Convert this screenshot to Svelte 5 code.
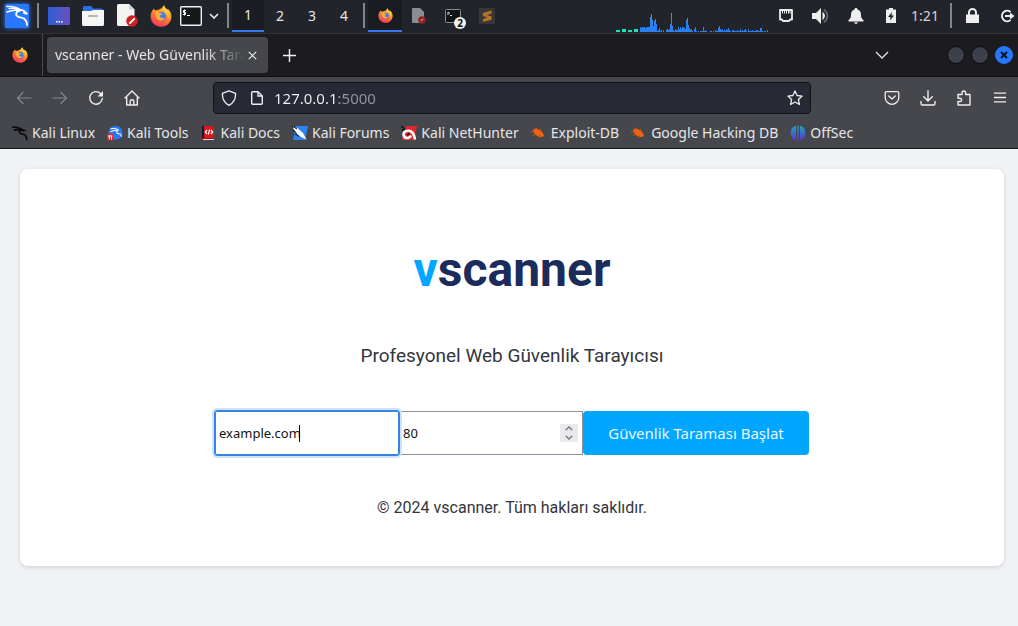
<script>
  let target = $state('example.com');
  let port = $state(80);
  let address = $state('127.0.0.1:5000');

  const workspaces = [1, 2, 3, 4];
  const bookmarks = [
    { name: 'Kali Linux', icon: 'dragon' },
    { name: 'Kali Tools', icon: 'tools' },
    { name: 'Kali Docs', icon: 'docs' },
    { name: 'Kali Forums', icon: 'forums' },
    { name: 'Kali NetHunter', icon: 'nethunter' },
    { name: 'Exploit-DB', icon: 'bug' },
    { name: 'Google Hacking DB', icon: 'bug' },
    { name: 'OffSec', icon: 'offsec' }
  ];
  // CPU load samples, one per pixel column, starting after the idle marks
  const load = [
    5, 4, 5, 5, 5, 4, 5, 5, 5, 5, 15, 18, 12, 6, 11, 13, 8, 1, 2, 4, 1, 2, 0, 2, 0, 0, 2, 3, 2, 3, 8, 19,
    6, 2, 1, 3, 2, 2, 5, 3, 5, 3, 5, 5, 4, 3, 12, 14, 7, 4, 2, 3, 1, 0, 3, 5, 1, 0, 1, 0, 1, 1, 1, 5, 1, 2, 1, 0,
    0, 0, 1, 1, 0, 1, 0, 2, 1, 1, 4, 6, 3, 2, 3, 1, 2, 1, 3, 2, 4, 2, 1, 0, 2, 2, 1, 1, 1, 2, 1, 1, 3,
    1, 2, 1, 2, 3, 1, 0, 3, 1, 1, 1, 2, 1, 1, 1, 2, 2, 1, 1, 4, 4, 1, 0, 1, 1, 0, 2
  ];
</script>

{#snippet firefox(size)}
  <svg width={size} height={size} viewBox="0 0 22 22" aria-hidden="true">
    <defs>
      <linearGradient id="fox" x1="0.8" y1="0" x2="0.3" y2="1">
        <stop offset="0" stop-color="#ffe14a" />
        <stop offset="0.45" stop-color="#ff8a2a" />
        <stop offset="1" stop-color="#f5325b" />
      </linearGradient>
    </defs>
    <path fill="url(#fox)" d="M4 3.500c.3 1 .8 1.500 1.700 2 .9-.6 2-.8 3.100-.6C9.800 4 11 3.300 12 3.200 12.300 2 13 1 14.200.2c.2 2 1.600 3.200 3.200 4.700.1-.5 0-1 0-1.500C20 5.600 21.700 8.600 21.500 12c-.4 5.600-4.800 9.800-10.400 9.800C5.300 21.800.6 17.200.6 11.500.6 8.300 1.800 5.500 4 3.500z" />
    <circle cx="11" cy="11.600" r="4.600" fill="#7a45d8" />
    <circle cx="11.700" cy="10.600" r="3.700" fill="#3c83e8" />
    <path fill="#ffae35" d="M4.500 7.500c2-1.500 4-1 5.200.6l2.600.5c0 1-1.600 1.500-2.500 2-.2 2.200 1.800 3 3.600 2.200 1 0 1.200.8.300 1.600-2 2-5.500 1.500-7-.7C5.500 11.500 5.800 9.300 4.500 7.500z" />
    <path fill="#ffd43e" d="M14.200.2c.2 2 1.600 3.200 3.200 4.700 2 3 2.600 6.500.6 9.800.4-4-1-6.700-4-8.500-1.400-1.800-1.500-4 .2-6z" opacity=".75" />
  </svg>
{/snippet}

{#snippet dragon(color)}
  <path fill="none" stroke={color} stroke-linecap="round" d="M1 2.200c3-.4 6 .2 8.600 2.200M2.600 5.200c2.500-1 5-.7 7-.1M9 4.500C6.500 6.500 7.500 9 10.500 9.200c3 .2 4 2.300 4.300 5.400" stroke-width="1.800" />
  <path fill={color} d="M9 3.800c2-.2 4 .7 6 2.800l-2.500-.5-1 .6L9 5.500z" />
{/snippet}

<div class="screen">
  <header class="panel">
    <button class="cell" aria-label="Applications">
      <svg class="kali" width="28" height="28" viewBox="0 0 28 28">
        <rect x="2" y="2" width="24" height="24" rx="1" fill="#2777ff" />
        <g fill="none" stroke="#fff" stroke-linecap="round" stroke-linejoin="round">
          <path stroke-width="1.400" d="M4 4.500c5-.5 9.500.3 14 3.500M4 10c4.500-2 8.500-2 12.500-1.500M6 6.500c3-.5 6-.2 9 .8" />
          <path stroke-width="1.800" d="M17 8.500c-4 .5-5.500 5-1.500 6.300 4 .9 7.500 1 8.700 8.200M17 8c3-.6 4.500 1 6.800 3.500l-3-.5" />
        </g>
      </svg>
    </button>
    <span class="rule"></span>
    <button class="cell" aria-label="Show desktop">
      <svg width="22" height="18" viewBox="0 0 22 18">
        <defs><linearGradient id="desk"><stop offset="0" stop-color="#2f5fd6" /><stop offset="1" stop-color="#6a4fc0" /></linearGradient></defs>
        <rect width="22" height="18" rx="1" fill="url(#desk)" />
        <path fill="#fff" d="M8 14h1.500v1.500H8zM10.500 14H12v1.500h-1.500zM13 14h1.500v1.500H13z" />
      </svg>
    </button>
    <button class="cell" aria-label="File manager">
      <svg width="22" height="20" viewBox="0 0 22 20">
        <path fill="#2b6fe0" d="M1 1.500Q1 0 2.500 0H9l2.500 2.500H19Q21 2.500 21 4.500V9H1z" />
        <path fill="#f5f5f3" d="M0 5h9l2-1h11v14.500Q22 20 20.500 20h-19Q0 20 0 18.500z" />
        <path stroke="#b5b5b2" stroke-width="2" stroke-linecap="round" d="M7 10h8" />
      </svg>
    </button>
    <button class="cell" aria-label="Text editor">
      <svg width="21" height="23" viewBox="0 0 21 23">
        <path fill="#f4f4f2" d="M1.500 0H12l5.500 5.500V22h-16Q0 22 0 20.500v-19Q0 0 1.500 0z" />
        <path fill="#cfcfcd" d="M12 0v5.500h5.500z" />
        <circle cx="15" cy="17" r="5.800" fill="#d2201f" />
        <path stroke="#fff" stroke-width="1.800" stroke-linecap="round" d="M13 19l4.200-4.200" />
      </svg>
    </button>
    <button class="cell" aria-label="Firefox">{@render firefox(22)}</button>
    <button class="cell slim" aria-label="Terminal">
      <svg width="22" height="20" viewBox="0 0 22 20">
        <rect x=".7" y=".7" width="20.600" height="18.600" rx="1" fill="#16191a" stroke="#eee" stroke-width="1.400" />
        <path fill="none" stroke="#fff" d="M6 4.500H3.500v2H5.500v2H3M4.500 3.500v6M7 9.500h3" />
      </svg>
    </button>
    <button class="cell arrow" aria-label="More terminals">
      <svg width="10" height="6" viewBox="0 0 10 6"><path fill="none" stroke="#eee" stroke-width="1.600" d="M1 1l4 4 4-4" /></svg>
    </button>
    <span class="rule"></span>
    {#each workspaces as n}
      <button class="cell space" class:active={n === 1}>{n}</button>
    {/each}
    <span class="rule"></span>
    <button class="cell active" aria-label="Firefox window">{@render firefox(15)}</button>
    <button class="cell" aria-label="Text editor window">
      <svg width="14" height="16" viewBox="0 0 14 16">
        <path fill="#8c8d90" d="M1 0h7l4 4v11H1Q0 15 0 14V1Q0 0 1 0z" />
        <circle cx="10" cy="12" r="3.800" fill="#92222a" /><path stroke="#c08a8e" stroke-width="1.200" d="M8.800 13.200l2.500-2.500" />
      </svg>
    </button>
    <button class="cell" aria-label="Two terminal windows">
      <span class="stack">
        <svg width="16" height="14" viewBox="0 0 16 14">
          <rect x=".5" y=".5" width="15" height="13" rx="1" fill="#121415" stroke="#8a8b8e" />
          <path fill="none" stroke="#ddd" d="M3 3l2 1.500M3 3v3M5 6.500h2" />
        </svg>
        <b class="count">2</b>
      </span>
    </button>
    <button class="cell" aria-label="Sublime Text window">
      <svg width="16" height="16" viewBox="0 0 16 16">
        <rect width="16" height="16" rx="1" fill="#37373a" />
        <path fill="#b8741e" d="M12.500 2.500v3L8 7l4.500 1.500v3.200L4 14v-3l4.500-1.400L4 8V5z" />
      </svg>
    </button>

    <svg class="graph" width="152" height="33" viewBox="0 0 152 33" role="img" aria-label="CPU load">
      <defs><linearGradient id="bar" gradientUnits="userSpaceOnUse" x1="0" y1="12" x2="0" y2="32"><stop offset="0" stop-color="#2fa8dc" /><stop offset=".6" stop-color="#2a80f0" /></linearGradient></defs>
      <path fill="#17e3b4" d="M0 30h4v2h-4zM6 29h4v3h-4zM12 30h4v2h-4zM18 29h4v3h-4z" />
      {#each load as h, i}
        <rect x={24 + i} y={32 - h} width="1" height={h} fill="url(#bar)" />
      {/each}
    </svg>
    <button class="cell tray" aria-label="Network">
      <svg width="14" height="13" viewBox="0 0 14 13"><path fill="none" stroke="#eee" stroke-width="1.800" stroke-linejoin="round" d="M1 1h12v9.500h-2L10 12H4l-1-1.500H1z" /><path stroke="#eee" d="M3.500 2v2.500M5.500 2v2.500M7.500 2v2.500M9.500 2v2.500M11 2v2.500" /></svg>
    </button>
    <button class="cell tray" aria-label="Volume">
      <svg width="17" height="16" viewBox="0 0 17 16"><path fill="#eee" d="M0 5h4l5-5v16l-5-5H0zM10.500 3.500q5 4.500 0 9z" /><path fill="none" stroke="#6d6f75" stroke-width="1.600" d="M12 1.500q7 6.500 0 13" /></svg>
    </button>
    <button class="cell tray" aria-label="Notifications">
      <svg width="16" height="16" viewBox="0 0 16 16"><path fill="#eee" d="M8 0c1 0 1.500.6 1.500 1.400C12 2 13 4 13 7c0 2.500.8 4 2.500 5v1.500H.5V12C2.200 11 3 9.500 3 7c0-3 1-5 3.500-5.600C6.500.6 7 0 8 0zM6.200 14.300h3.600Q9.500 16 8 16t-1.800-1.700z" /></svg>
    </button>
    <button class="cell tray" aria-label="Battery">
      <svg width="10" height="15" viewBox="0 0 10 15"><path fill="#eee" d="M3 0h4v1.500h3V15H0V1.500h3z" /><path fill="#22242b" d="M6 4L2 9h2.500L4 12.500 8 7.500H5.500z" /></svg>
    </button>
    <time class="clock">1:21</time>
    <span class="rule late"></span>
    <button class="cell" aria-label="Lock screen">
      <svg width="13" height="15" viewBox="0 0 13 15"><path fill="#eee" d="M0 6.500h13V15H0z" /><path fill="none" stroke="#eee" stroke-width="2" d="M3 7V4.500a3.500 3.500 0 0 1 7 0V7" /></svg>
    </button>
    <button class="cell leave" aria-label="Log out">
      <svg width="16" height="14" viewBox="0 0 16 14"><path fill="none" stroke="#eee" stroke-width="2" d="M11.500 3A5.200 5.200 0 1 0 11.500 11M6 7h7" /><path fill="#eee" d="M11 3.500L15.500 7 11 10.500z" /></svg>
    </button>
  </header>

  <div class="tabs">
    <button class="view" aria-label="Firefox View">{@render firefox(16)}</button>
    <div class="tab">
      <span class="title">vscanner - Web Güvenlik Tarayıcısı</span>
      <button class="close" aria-label="Close tab">
        <svg width="9" height="9" viewBox="0 0 9 9"><path stroke="#eee" stroke-width="1.200" d="M.8.800l7.400 7.400M8.200.8L.8 8.200" /></svg>
      </button>
    </div>
    <button class="plus" aria-label="New tab">
      <svg width="13" height="13" viewBox="0 0 13 13"><path stroke="#f2f2f2" stroke-width="1.400" d="M6.500 0v13M0 6.500h13" /></svg>
    </button>
    <button class="list" aria-label="List all tabs">
      <svg width="14" height="8" viewBox="0 0 14 8"><path fill="none" stroke="#e6e6e6" stroke-width="1.300" d="M1 1l6 6 6-6" /></svg>
    </button>
    <div class="controls">
      <button class="dot" aria-label="Minimize"></button>
      <button class="dot" aria-label="Maximize"></button>
      <button class="dot quit" aria-label="Close window">
        <svg width="8" height="8" viewBox="0 0 8 8"><path stroke="#0c1324" stroke-width="2" d="M1 1l6 6M7 1L1 7" /></svg>
      </button>
    </div>
  </div>

  <nav class="toolbar" aria-label="Navigation">
    <button class="tool" aria-label="Back"><svg width="16" height="16" viewBox="0 0 16 16"><path fill="none" stroke="#85868b" stroke-width="1.200" stroke-linecap="round" d="M15 8H1.500M7 2.500L1.500 8 7 13.500" /></svg></button>
    <button class="tool" aria-label="Forward"><svg width="16" height="16" viewBox="0 0 16 16"><path fill="none" stroke="#85868b" stroke-width="1.200" stroke-linecap="round" d="M1 8h13.500M9 2.500L14.500 8 9 13.500" /></svg></button>
    <button class="tool" aria-label="Reload"><svg width="16" height="16" viewBox="0 0 16 16"><path fill="none" stroke="#eee" stroke-width="1.400" stroke-linecap="round" d="M12.500 3.500A6.300 6.300 0 1 0 14.300 8.500" /><path fill="#eee" d="M15 1v5.500H9.500z" /></svg></button>
    <button class="tool" aria-label="Home"><svg width="16" height="16" viewBox="0 0 16 16"><path fill="none" stroke="#eee" stroke-width="1.400" stroke-linejoin="round" stroke-linecap="round" d="M1 8l7-7 7 7M2.700 7v8h10.600V7M6.200 15v-4q0-1.200 1.800-1.200T9.800 11v4" /></svg></button>
    <div class="address">
      <svg width="16" height="16" viewBox="0 0 16 16"><path fill="none" stroke="#eee" stroke-width="1.300" stroke-linejoin="round" d="M8 .8l6.600 2.500c.2 5.500-1.600 9.500-6.600 12C3 12.800 1.200 8.800 1.400 3.300z" /></svg>
      <svg width="12" height="14" viewBox="0 0 12 14"><path fill="none" stroke="#eee" stroke-width="1.400" stroke-linejoin="round" d="M1.700.7H7l4.300 4.300v7.300q0 1-1 1H1.700q-1 0-1-1V1.700q0-1 1-1z" /><path fill="none" stroke="#eee" stroke-width="1.300" d="M7 1v4h4" /></svg>
      <input class="url" aria-label="Address" bind:value={address} />
      <button class="star" aria-label="Bookmark this page"><svg width="16" height="16" viewBox="0 0 16 16"><path fill="none" stroke="#eee" stroke-width="1.300" stroke-linejoin="round" d="M8 .9l2.100 4.600 5 .6-3.700 3.400 1 5L8 12l-4.400 2.500 1-5L.9 6.100l5-.6z" /></svg></button>
    </div>
    <button class="tool" aria-label="Save to Pocket"><svg width="16" height="16" viewBox="0 0 16 16"><path fill="none" stroke="#eee" stroke-width="1.300" stroke-linecap="round" stroke-linejoin="round" d="M2.500 1.700h11q1.300 0 1.300 1.300v4.500a6.800 6.800 0 0 1-13.600 0V3q0-1.300 1.300-1.300zM4.700 6L8 9l3.300-3" /></svg></button>
    <button class="tool" aria-label="Downloads"><svg width="16" height="16" viewBox="0 0 16 16"><path fill="none" stroke="#eee" stroke-width="1.400" stroke-linecap="round" stroke-linejoin="round" d="M8 .7v10M3.700 6.700L8 11l4.300-4.300M1 11.500v2q0 1.500 1.500 1.500h11q1.500 0 1.500-1.500v-2" /></svg></button>
    <button class="tool" aria-label="Extensions"><svg width="16" height="16" viewBox="0 0 16 16"><path fill="none" stroke="#eee" stroke-width="1.400" stroke-linejoin="round" d="M2 4.500h4V3q0-2 1.800-2t1.800 2v1.500H14V15H2v-3.500h2q1.600 0 1.600-1.600T4 8.300H2z" /></svg></button>
    <button class="tool" aria-label="Menu"><svg width="12" height="11" viewBox="0 0 12 11"><path stroke="#eee" stroke-width="1.300" d="M0 1.200h12M0 5.500h12M0 9.800h12" /></svg></button>
  </nav>

  <nav class="bookmarks" aria-label="Bookmarks">
    {#each bookmarks as mark}
      <a href="#top">
        <svg width="16" height="16" viewBox="0 0 16 16" aria-hidden="true">
          {#if mark.icon === 'dragon'}
            {@render dragon('#0b0b0c')}
          {:else if mark.icon === 'tools'}
            <circle cx="8.500" cy="7.800" r="7" fill="#2b78f5" />
            <path fill="none" stroke="#fff" stroke-width="1.100" stroke-linecap="round" d="M4 3.800q5-1 7.500 1.400M4 6.500q4-1.700 6-.7-.8 2.700 2 3 2 .2 2.500 2.500" />
            <rect y="8.500" width="6.500" height="7" rx="2" fill="#e2252b" />
            <path stroke="#fff" d="M2.300 10.500v4M4.500 10.500v4M1.300 11h4.200" />
          {:else if mark.icon === 'docs'}
            <path fill="#151b2c" d="M1 1h3v14H1z" /><path fill="#d31820" d="M3 1h10v12H3z" /><path fill="#a80f16" d="M1 13h12v2H1z" /><path fill="#f0d8d8" d="M2 14h11v1H2z" />
            <path fill="none" stroke="#fff" stroke-width="1.200" d="M6 5L4.300 7 6 9M10 5l1.700 2L10 9M8.700 4.500L7.300 9.500" />
          {:else if mark.icon === 'forums'}
            <path fill="#2b86f5" d="M4 1h12l-3 14H1z" />
            <path fill="#fff" d="M1 1.500l5 2 5 4.500 3.500 6.500-5.500-2.500-5-4.500L1.500 4z" /><path fill="none" stroke="#111" d="M0 1l5 3M1 5l3.500 3M3 9l4 2.500" />
          {:else if mark.icon === 'nethunter'}
            <path fill="#e0262d" d="M5 1h11l-3 14H1z" />
            <path fill="none" stroke="#fff" stroke-width="2.600" stroke-linecap="round" d="M13.800 13.500Q12.500 6.500 8 5.800 2.500 5.500 2.500 9.500q.5 4 4.500 3.500l2.500-1.500" /><path stroke="#111" stroke-width="1.500" d="M0 1l4 3M6 10l2.500-1.500M1 5l2.500-.5" />
          {:else if mark.icon === 'bug'}
            <path fill="#ee6210" d="M2 5q2-2.500 5-.5 4.500.5 6 6.500l-2 .8q-3.500.8-5.800-1.600Q2.300 8.500 2 5z" />
            <path stroke="#b8531f" d="M5 2.500L7.500 5M0 6.500l4 .5M1.500 10.500l4-1.500M9.500 4v2.500M8 13l.5-3" />
          {:else}
            <defs><linearGradient id="off" x1="0" y1="0" x2="0" y2="1"><stop offset="0" stop-color="#1ba6c2" /><stop offset="1" stop-color="#5b35c9" /></linearGradient></defs>
            <path fill="url(#off)" d="M6 .8v14.400A7.500 7.500 0 0 1 6 .8zM7.300.5h1.400v15H7.300zM10 .8a7.500 7.500 0 0 1 0 14.400z" />
          {/if}
        </svg>
        {mark.name}
      </a>
    {/each}
  </nav>

  <main>
    <section class="card">
      <h1><span>v</span>scanner</h1>
      <p class="lead">Profesyonel Web Güvenlik Tarayıcısı</p>
      <form onsubmit={(e) => e.preventDefault()}>
        <div class="field focused">
          <input aria-label="Alan adı" type="text" bind:value={target} />
          <i class="caret"></i>
        </div>
        <div class="field port">
          <input aria-label="Port" type="number" bind:value={port} />
          <div class="spin">
            <button type="button" aria-label="Artır" onclick={() => port++}><svg width="8" height="5" viewBox="0 0 8 5"><path fill="none" stroke="#77777b" stroke-width="1.300" d="M.7 4.300L4 1l3.300 3.300" /></svg></button>
            <button type="button" aria-label="Azalt" onclick={() => port--}><svg width="8" height="5" viewBox="0 0 8 5"><path fill="none" stroke="#77777b" stroke-width="1.300" d="M.7.700L4 4 7.300.7" /></svg></button>
          </div>
        </div>
        <button class="submit">Güvenlik Taraması Başlat</button>
      </form>
      <footer>© 2024 vscanner. Tüm hakları saklıdır.</footer>
    </section>
  </main>
</div>

<style>
  :global(body) { background: #f0f2f5; }
  * { box-sizing: border-box; }
  .screen { font: 14px/20px "Noto Sans", sans-serif; color: #e6e6e8; }
  button { appearance: none; border: 0; padding: 0; margin: 0; background: none; color: inherit; font: inherit; display: flex; align-items: center; justify-content: center; }
  svg { display: block; flex: none; }

  .panel { display: flex; height: 34px; padding-bottom: 2px; background: #22242b; border-bottom: 1px solid #303238; }
  .cell { width: 34px; height: 31px; flex: none; }
  .slim { width: 26px; }
  .arrow { width: 20px; }
  .space { width: 32px; }
  .tray { width: 35px; }
  .active { height: 32px; background: #1a1c22; border-bottom: 2px solid #3277ee; }
  .leave { width: 29px; justify-content: flex-end; padding-right: 3px; }
  .kali { filter: drop-shadow(0 0 2px #2777ff); }
  .rule { width: 2px; height: 25px; margin: 3px; background: #84858a; flex: none; }
  .graph { margin-left: auto; }
  .clock { width: 34px; line-height: 31px; text-align: center; color: #d4d4d6; }
  .late { margin-left: 8px; }
  .stack { position: relative; }
  .count { position: absolute; left: 9px; top: 8px; width: 12px; height: 12px; border-radius: 6px; background: #f2f2f2; color: #111; font-size: 10px; line-height: 12px; text-align: center; }

  .tabs { display: flex; align-items: center; height: 43px; background: #1b1b20; border-bottom: 1px solid #0f0f13; }
  .view { width: 43px; height: 42px; padding-right: 3px; border-right: 1px solid #4a4b50; }
  .tab { display: flex; align-items: center; width: 221px; height: 36px; margin-left: 4px; padding: 0 8px; border-radius: 4px; background: #45474c; }
  .title { flex: 1; overflow: hidden; white-space: nowrap; mask-image: linear-gradient(to right, #000 150px, transparent 190px); }
  .close { width: 16px; height: 16px; }
  .plus { width: 43px; height: 36px; }
  .list { margin-left: auto; width: 32px; height: 36px; }
  .controls { display: flex; gap: 6px; margin: 0 5px 0 49px; }
  .dot { width: 18px; height: 18px; border-radius: 9px; background: #3b404b; border: 1px solid #0c0c10; }
  .quit { background: #2777ff; border-color: #2777ff; }

  .toolbar { display: flex; align-items: center; height: 41px; padding-left: 6px; background: #45474c; }
  .tool { width: 36px; height: 36px; flex: none; }
  .address { flex: 1; display: flex; align-items: center; gap: 14px; height: 32px; min-width: 0; margin: 0 63px; padding: 0 7px; background: #272934; border: 1px solid #111217; border-radius: 4px; }
  .address > svg + svg { margin-right: -3px; }
  .url { flex: 1; min-width: 0; border: 0; padding: 0; outline: 0; font: inherit; font-size: 15px; background: linear-gradient(to right, #f5f5f5 65px, #96979d 65px); background-clip: text; color: transparent; caret-color: #fff; }
  .bookmarks { display: flex; gap: 12px; height: 31px; padding: 0 12px; background: #45474c; border-bottom: 1px solid #16171b; }
  .bookmarks a { display: flex; align-items: center; gap: 4px; color: inherit; text-decoration: none; white-space: nowrap; }

  main { padding: 20px 14px 20px 20px; }
  .card { padding: 72px 20px 48px; border-radius: 8px; background: #fff; box-shadow: 0 1px 4px rgba(0, 0, 0, 0.15); text-align: center; font-family: Roboto, sans-serif; color: #33363d; }
  h1 { margin: 0 0 46px; font-size: 48px; line-height: 58px; font-weight: 700; color: #1b2b5b; }
  h1 span { color: #00a6ff; }
  .lead { margin: 0; font-size: 19px; line-height: 22px; }
  form { display: flex; justify-content: center; margin: 44px 0 43px; }
  .field { position: relative; display: flex; width: 184px; height: 44px; border: 1px solid #8f8f9d; background: #fff; }
  .field input { width: 100%; min-width: 0; border: 0; outline: 0; padding: 0 3px; background: none; color: #111; font: 13px/20px "Noto Sans", sans-serif; appearance: textfield; }
  .field input::-webkit-inner-spin-button { appearance: none; }
  .focused { outline: 1px solid #3584e4; border-color: #3584e4; border-radius: 2px; box-shadow: 0 0 0 3px #cfe4fb; z-index: 1; }
  .caret { position: absolute; left: 83px; top: 13px; width: 1px; height: 17px; background: #000; }
  .spin { align-self: center; flex: none; display: flex; flex-direction: column; margin-right: 4px; background: #e9e9ed; }
  .spin button { width: 18px; height: 9px; }
  .submit { width: 226px; height: 44px; border-radius: 4px; background: #00a6ff; color: #e8f7ff; font: 15px/20px "Noto Sans", sans-serif; }
  footer { font-size: 16px; line-height: 20px; }
</style>
